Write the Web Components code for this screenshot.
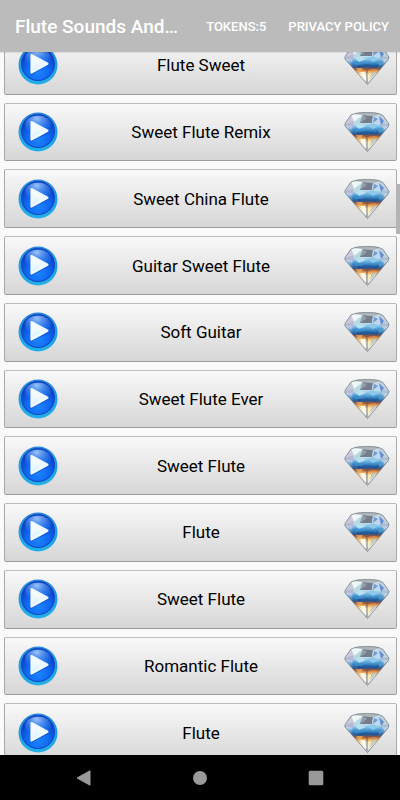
<!DOCTYPE html>
<html lang="en">
<head>
<meta charset="utf-8">
<meta name="viewport" content="width=device-width, initial-scale=1">
<title>Flute Sounds</title>
<style>
body{
    margin: 0;
    font-family: Roboto, sans-serif;
    background: #fafafa;
}
</style>
</head>
<body>
<flute-app>
    <app-bar slot="top">
        Flute Sounds And…
        <button slot="actions" type="button">TOKENS:5</button>
        <a slot="actions" href="#privacy">PRIVACY POLICY</a>
    </app-bar>
    <sound-row>Flute Sweet</sound-row>
    <sound-row>Sweet Flute Remix</sound-row>
    <sound-row>Sweet China Flute</sound-row>
    <sound-row>Guitar Sweet Flute</sound-row>
    <sound-row>Soft Guitar</sound-row>
    <sound-row>Sweet Flute Ever</sound-row>
    <sound-row>Sweet Flute</sound-row>
    <sound-row>Flute</sound-row>
    <sound-row>Sweet Flute</sound-row>
    <sound-row>Romantic Flute</sound-row>
    <sound-row>Flute</sound-row>
    <nav-bar slot="bottom"></nav-bar>
</flute-app>

<template id="flute-app">
<style>
:host{
    display: flex;
    flex-direction: column;
    height: 100vh;
    overflow: hidden;
}
main{
    position: relative;
    display: flex;
    flex-direction: column;
    flex: 1;
    min-height: 0;
    overflow: hidden;
}
/* the list is scrolled a little, so its ends run under both bars */
.list{
    flex: 1;
    display: grid;
    grid-auto-rows: 1fr;
    gap: 8px;
    margin: -16px 3px -7px 4px;
}
.thumb{
    position: absolute;
    top: 132px;
    right: 0;
    width: 4px;
    height: 50px;
    background: #b4b4b4;
}
</style>
<slot name="top"></slot>
<main>
    <div class="list"><slot></slot></div>
    <div class="thumb"></div>
</main>
<slot name="bottom"></slot>
</template>

<template id="app-bar">
<style>
:host{
    display: block;
    flex: none;
    z-index: 1;
}
header{
    display: flex;
    align-items: center;
    gap: 22px;
    height: 52px;
    padding: 0 11px 0 15px;
    color: #fff;
    background: #bbb;
    box-shadow: 0 1px 1px rgba(0,0,0,.08);
}
h1{
    flex: 1;
    min-width: 0;
    margin: 0;
    font-size: 19px;
    font-weight: 500;
    white-space: nowrap;
    overflow: hidden;
    text-overflow: ellipsis;
}
::slotted(button), ::slotted(a){
    flex: none;
    padding: 0;
    border: 0;
    background: none;
    color: #fff;
    font-family: inherit;
    font-size: 13px;
    font-weight: 500;
    text-decoration: none;
    white-space: nowrap;
}
</style>
<header>
    <h1><slot></slot></h1>
    <slot name="actions"></slot>
</header>
</template>

<template id="sound-row">
<style>
:host{
    display: grid;
    min-height: 56px;
}
button{
    display: grid;
    grid-template-columns: 40px 1fr 46px;
    align-items: center;
    width: 100%;
    padding: 0 6px 0 13px;
    border: 1px solid #b0b0b0;
    border-color: #bdbdbd #a8a8a8 #9c9c9c #a8a8a8;
    border-radius: 2px;
    background: linear-gradient(#f9f9f9, #d6d6d6);
    color: #000;
    font-family: inherit;
    font-size: 17px;
    line-height: 24px;
}
svg{
    display: block;
}
</style>
<button type="button">
    <svg width="40" height="40" viewBox="0 0 40 40" aria-hidden="true">
        <defs>
            <linearGradient id="rim" x1="0" y1="0" x2="0" y2="1">
                <stop offset="0" stop-color="#2a86dc"/>
                <stop offset=".5" stop-color="#2499e4"/>
                <stop offset="1" stop-color="#22b0e8"/>
            </linearGradient>
            <radialGradient id="ball" cx=".5" cy=".75" r=".65">
                <stop offset="0" stop-color="#1c86ff"/>
                <stop offset=".55" stop-color="#1068f2"/>
                <stop offset="1" stop-color="#0b3fc4"/>
            </radialGradient>
            <radialGradient id="gloss" cx=".45" cy=".15" r=".8">
                <stop offset="0" stop-color="#b5dcff" stop-opacity=".85"/>
                <stop offset=".6" stop-color="#5aa8ff" stop-opacity=".4"/>
                <stop offset="1" stop-color="#3a95ff" stop-opacity="0"/>
            </radialGradient>
            <linearGradient id="tri" x1="0" y1="0" x2="0" y2="1">
                <stop offset="0" stop-color="#fff"/>
                <stop offset="1" stop-color="#d9f1ff"/>
            </linearGradient>
        </defs>
        <circle cx="20" cy="20" r="19.500" fill="url(#rim)"/>
        <circle cx="20" cy="19" r="17" fill="#0c48be"/>
        <circle cx="20" cy="19" r="16" fill="url(#ball)"/>
        <ellipse cx="20" cy="13" rx="13" ry="9.500" fill="url(#gloss)"/>
        <path d="M13.500 11 30 19.500 13.500 28.500Z" fill="#0739a8" opacity=".45" stroke="#0739a8" stroke-width="2.500" stroke-linejoin="round"/>
        <path d="M13.500 10 29.500 18.800 13.500 27.500Z" fill="url(#tri)" stroke="#f0faff" stroke-width="2.200" stroke-linejoin="round"/>
    </svg>
    <span><slot></slot></span>
    <svg width="46" height="40" viewBox="0 0 46 40" aria-hidden="true">
        <defs>
            <linearGradient id="gem" x1="0" y1="0" x2="0" y2="1">
                <stop offset="0" stop-color="#b9c2c8"/>
                <stop offset=".28" stop-color="#c9deee"/>
                <stop offset=".38" stop-color="#6db4e0"/>
                <stop offset=".46" stop-color="#3886c4"/>
                <stop offset=".54" stop-color="#2a5f9c"/>
                <stop offset=".59" stop-color="#8a5444"/>
                <stop offset=".66" stop-color="#eda552"/>
                <stop offset=".74" stop-color="#fbe3b4"/>
                <stop offset=".86" stop-color="#f3f1ea"/>
                <stop offset="1" stop-color="#b8bfc4"/>
            </linearGradient>
            <linearGradient id="edge">
                <stop offset="0" stop-color="#e6eaf2" stop-opacity=".9"/>
                <stop offset=".2" stop-color="#e6eaf2" stop-opacity="0"/>
                <stop offset=".8" stop-color="#e6eaf2" stop-opacity="0"/>
                <stop offset="1" stop-color="#e6eaf2" stop-opacity=".8"/>
            </linearGradient>
            <clipPath id="cut"><path d="M7 3Q10 1.500 15 .8 23 0 31 .8 36 1.500 39 3.500L45 12 44 15 23.500 39.500 1 14 1 11.500Z"/></clipPath>
        </defs>
        <g clip-path="url(#cut)">
            <path d="M0 0H46V40H0Z" fill="url(#gem)"/>
            <path d="M7 2 1 12 10 9Z" fill="#c9cbdc"/>
            <path d="M7 2 19 3 10 10Z" fill="#f0f5f6"/>
            <path d="M1 12 10 9 8 17Z" fill="#b9b8d2"/>
            <path d="M10 10 18 4 17 11 11 14Z" fill="#b4dbe2"/>
            <path d="M19 3 29 4 28 11 16 11Z" fill="#747d8c"/>
            <path d="M19 3 23 6 16 11Z" fill="#949eac"/>
            <path d="M29 4 36 2 38 11 28 11Z" fill="#c3d8ec"/>
            <path d="M30 5 34 7 29 11Z" fill="#6e9bd0"/>
            <path d="M36 2 45 12 38 11Z" fill="#c2d2dc"/>
            <path d="M35 4 40 9 37 13Z" fill="#5f8dd2"/>
            <path d="M38 11 45 12 41 18 38 15Z" fill="#a9bdd4"/>
            <path d="M9 1H37L30 4 19 3Z" fill="#adb6ba"/>
            <path d="M11 13 17 11 22 14 15 17Z" fill="#b8e0f2"/>
            <path d="M23 13 29 11 35 14 29 17Z" fill="#8cc9ea"/>
            <path d="M9 16 18 17 22 20 12 20Z" fill="#3d93d0" opacity=".7"/>
            <path d="M13 20 21 19 31 20 35 19 33 23 24 22 14 23Z" fill="#1d4f8e" opacity=".55"/>
            <path d="M33 17 40 16 36 21Z" fill="#4a97cb"/>
            <path d="M12 23 19 23 16 28Z" fill="#f4b264" opacity=".7"/>
            <path d="M21 24 25 23 23 29Z" fill="#8d4a2d" opacity=".55"/>
            <path d="M27 24 33 24 29 27Z" fill="#dc8e4b" opacity=".6"/>
            <path d="M16 27 21 27 22 36Z" fill="#fffdf4" opacity=".9"/>
            <path d="M22 27 24 27 24 38 22 38Z" fill="#7d8790" opacity=".55"/>
            <path d="M27 28 33 26 26 35Z" fill="#a9c6d8" opacity=".75"/>
            <path d="M24 29 27 28 25 37Z" fill="#ffe9a8" opacity=".9"/>
            <path d="M0 14H46V40H0Z" fill="url(#edge)"/>
        </g>
        <path d="M7 3Q10 1.500 15 .8 23 0 31 .8 36 1.500 39 3.500L45 12 44 15 23.500 39.500 1 14 1 11.500Z" fill="none" stroke="#59636c" stroke-opacity=".75" stroke-width=".8"/>
    </svg>
</button>
</template>

<template id="nav-bar">
<style>
:host{
    display: block;
    flex: none;
    z-index: 1;
}
nav{
    display: flex;
    justify-content: space-around;
    align-items: center;
    height: 45px;
    padding: 0 26px;
    background: #000;
}
button{
    display: flex;
    padding: 10px;
    border: 0;
    background: none;
}
svg{
    fill: #999;
}
</style>
<nav>
    <button type="button" aria-label="Back"><svg width="16" height="16" viewBox="0 0 16 16"><path d="M1 8 14 .8V15.200Z" stroke="#999" stroke-linejoin="round"/></svg></button>
    <button type="button" aria-label="Home"><svg width="16" height="16" viewBox="0 0 16 16"><circle cx="8" cy="8" r="7"/></svg></button>
    <button type="button" aria-label="Recent apps"><svg width="16" height="16" viewBox="0 0 16 16"><rect x=".7" y=".7" width="14.600" height="14.600" rx="1.500"/></svg></button>
</nav>
</template>

<script>
function define(name) {
    const template = document.getElementById(name);
    customElements.define(name, class extends HTMLElement {
        constructor() {
            super();
            this.attachShadow({mode:'open'});
            this.shadowRoot.appendChild(template.content.cloneNode(true));
        }
    });
}
['flute-app', 'app-bar', 'sound-row', 'nav-bar'].forEach(define);
</script>
</body>
</html>
